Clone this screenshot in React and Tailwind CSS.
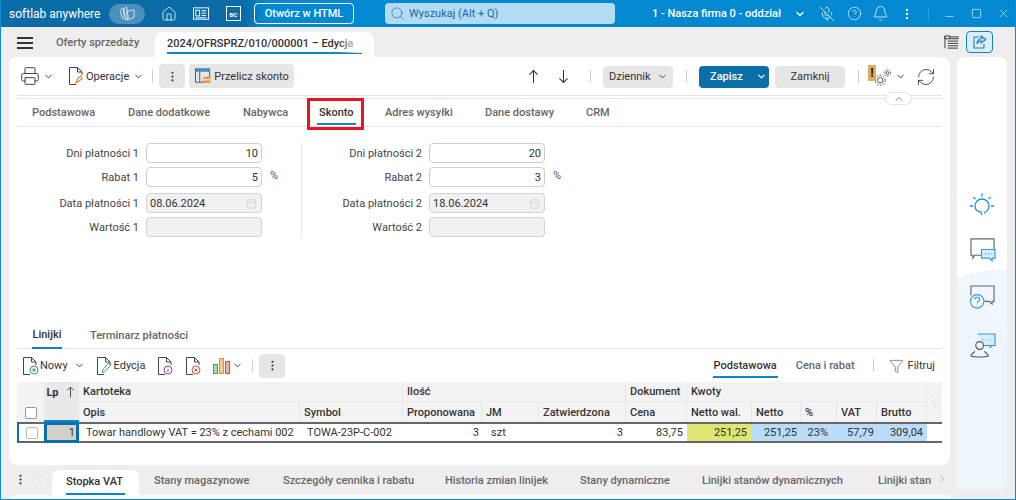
import React from 'react';
import {
  Bell, ChevronDown, ChevronLeft, ChevronRight, ChevronUp, CircleHelp,
  EllipsisVertical, Funnel, House, Minus, MicOff, Printer, RefreshCw, Search, Square, X,
} from 'lucide-react';

const mainTabs = [
  ['Podstawowa', 'w-[96px]'],
  ['Dane dodatkowe', 'w-[115px]'],
  ['Nabywca', 'w-[76px]'],
  ['Skonto', 'w-[66px]'],
  ['Adres wysyłki', 'w-[100px]'],
  ['Dane dostawy', 'w-[101px]'],
  ['CRM', 'w-[40px]'],
];

const bottomTabs = [
  ['Stany magazynowe', 'w-[129px]'],
  ['Szczegóły cennika i rabatu', 'w-[162px]'],
  ['Historia zmian linijek', 'w-[135px]'],
  ['Stany dynamiczne', 'w-[122px]'],
  ['Linijki stanów dynamicznych', 'w-[176px]'],
  ['Linijki stan', 'w-[63px]'],
];

const gridCols = 'grid grid-cols-[27px_18px_17px_221px_103px_79px_57px_87px_61px_65px_49px_36px_40px_50px_14px]';
const headCell = 'flex items-center px-1 border-r border-[#e6e6e6] text-[#333] whitespace-nowrap overflow-hidden';

const DocIcon = ({ children, className = '' }) => (
  <svg viewBox="0 0 18 20" className={`w-[18px] h-[20px] shrink-0 ${className}`} fill="none">
    <path d="M2.5 18.5V1.5h8l4.5 4.5v3M10.5 1.5V6H15M2.5 18.5H9" stroke="#444" strokeWidth="1" />
    {children}
  </svg>
);

// tall thin arrow, the icon pack's one is too squat
const Arrow = ({ down, className = '' }) => (
  <svg viewBox="0 0 12 16" className={`w-[11px] h-[15px] ${down ? 'rotate-180' : ''} ${className}`} fill="none" stroke="#333" strokeWidth="1.100">
    <path d="M6 15V1.500M1.500 6L6 1.500 10.500 6" />
  </svg>
);

const Sep = ({ className = '' }) => <div className={`w-px h-[13px] bg-[#cfcfcf] shrink-0 ${className}`} />;

const Field = ({ label, value, suffix, disabled, date, className = '' }) => (
  <div className={`flex items-center h-[20px] ${className}`}>
    <span className="w-[122px] text-right text-[#444] mr-[7px] whitespace-nowrap">{label}</span>
    <div
      className={`w-[116px] h-full rounded-[4px] border flex items-center justify-between px-[3px] ${
        disabled ? 'bg-[#f1f1f1] border-[#d4d4d4]' : 'bg-white border-[#cdcdcd] justify-end'
      }`}
    >
      <span className="text-[#333]">{value}</span>
      {date && (
        <svg viewBox="0 0 12 12" className="w-[11px] h-[11px] mr-[1px]" fill="none" stroke="#dcdcdc" strokeWidth="1.2">
          <rect x="1.5" y="2" width="9" height="9" rx="1" />
          <path d="M1.5 5h9M4 1v2M8 1v2" />
        </svg>
      )}
    </div>
    {suffix && <span className="w-0 ml-2 -mr-2 text-[#555] -mt-1 whitespace-nowrap">{suffix}</span>}
  </div>
);

const FormCol = ({ n, vals, className = '' }) => (
  <div className={`flex flex-col gap-[4px] ${className}`}>
    <Field label={`Dni płatności ${n}`} value={vals[0]} />
    <Field label={`Rabat ${n}`} value={vals[1]} suffix="%" />
    <Field label={`Data płatności ${n}`} value={vals[2]} disabled date className="mt-[2px]" />
    <Field label={`Wartość ${n}`} disabled />
  </div>
);

export default function App() {
  return (
    <div className="w-[1016px] h-[500px] overflow-hidden flex flex-col bg-[#eeeeee] border-x border-b border-[#0a8dd4] text-[11px] leading-none font-['Roboto',sans-serif] text-[#333]">
      {/* top bar */}
      <header className="h-[27px] shrink-0 -mx-px flex items-center text-white bg-[linear-gradient(90deg,#0a6ba6_0%,#0a6ba6_24%,#0389d2_26%,#0389d2_100%)]">
        <span className="ml-[9px] text-[12px] w-[100px] shrink-0 whitespace-nowrap">softlab anywhere</span>
        <div className="w-[36px] h-[20px] shrink-0 rounded-full bg-[#4c90bd] flex items-center justify-center">
          <svg viewBox="0 0 18 16" className="w-[17px] h-[15px]" fill="none" stroke="#d5e6f2" strokeWidth="1">
            <path d="M1 5l3-3 2 10-2 2zM5 3l3-2 2 12-3 2zM8 6l8-2v8l-7 3z" />
          </svg>
        </div>
        <House className="w-[16px] h-[16px] ml-[16px] shrink-0" strokeWidth={1.2} />
        <svg viewBox="0 0 18 14" className="w-[17px] h-[14px] ml-[16px] shrink-0" fill="none" stroke="white" strokeWidth="1">
          <rect x="0.5" y="0.5" width="16" height="12" />
          <rect x="3" y="3" width="4" height="6" />
          <path d="M9 3.5h5M9 6h5M9 8.500h5M3 11h11" />
        </svg>
        <div className="w-[15px] h-[15px] ml-[16px] shrink-0 border border-white flex items-end justify-center text-[6px] font-bold pb-[2px]">BC</div>
        <div className="w-[100px] h-[21px] ml-[13px] shrink-0 rounded-[4px] border border-white flex items-center justify-center font-medium">
          Otwórz w HTML
        </div>
        <div className="w-[230px] h-[21px] ml-[31px] shrink-0 rounded-[4px] bg-[#b3dcf4] flex items-center text-[#17689c]">
          <Search className="w-[15px] h-[15px] ml-[5px] mr-[4px]" strokeWidth={1.1} />
          <span>Wyszukaj (Alt + Q)</span>
        </div>
        <span className="ml-[37px] w-[128px] shrink-0 whitespace-nowrap font-medium">1 - Nasza firma 0 - oddział</span>
        <ChevronDown className="w-[12px] h-[12px] ml-[14px] shrink-0" strokeWidth={2.5} />
        <MicOff className="w-[16px] h-[16px] ml-[13px] shrink-0" strokeWidth={1.1} />
        <CircleHelp className="w-[15px] h-[15px] ml-[12px] shrink-0" strokeWidth={1.1} />
        <Bell className="w-[17px] h-[17px] ml-[10px] shrink-0" strokeWidth={1.1} />
        <EllipsisVertical className="w-[14px] h-[14px] ml-[11px] shrink-0" strokeWidth={2} />
        <div className="w-px h-[15px] bg-[#2f9ddb] ml-[14px] shrink-0" />
        <Minus className="w-[13px] h-[13px] ml-[14px] mt-[5px] shrink-0" strokeWidth={1} />
        <Square className="w-[11px] h-[11px] ml-[15px] shrink-0" strokeWidth={1.300} />
        <X className="w-[13px] h-[13px] ml-[15px] shrink-0" strokeWidth={1} />
      </header>

      <div className="flex-1 flex min-h-0">
        <div className="w-[950px] shrink-0 flex flex-col min-w-0">
          {/* document tabs */}
          <div className="h-[30px] shrink-0 flex items-end relative">
            <div className="ml-[16px] mb-[8px] w-[16px] flex flex-col gap-[3px]">
              <div className="h-[2px] bg-[#333]" />
              <div className="h-[2px] bg-[#333]" />
              <div className="h-[2px] bg-[#333]" />
            </div>
            <span className="ml-[23px] mb-[9px] w-[100px] text-[#666] font-medium whitespace-nowrap">Oferty sprzedaży</span>
            <div className="w-[219px] h-[25px] -ml-[1px] bg-white rounded-t-[8px] px-[12px] relative">
              <div className="h-[22px] border-b-2 border-[#0a86cb] flex items-center pt-[3px] overflow-hidden whitespace-nowrap font-medium text-[#333]">
                2024/OFRSPRZ/010/000001 – Edycja
              </div>
              <div className="absolute right-[12px] top-[4px] w-[24px] h-[17px] bg-[linear-gradient(90deg,rgba(255,255,255,0),white)]" />
            </div>
            <svg viewBox="0 0 16 16" className="absolute left-[943px] top-[8px] w-[15px] h-[15px]" fill="none" stroke="#333" strokeWidth="1">
              <path d="M1 1h5v3H1zM1 1v13M6 2h9v2H6M4 6.500h11M4 9h11M4 11.500h11M4 14h11" />
            </svg>
          </div>

          {/* main card */}
          <div className="ml-[8px] mr-[1px] h-[408px] shrink-0 bg-white rounded-[8px] px-[8px] flex flex-col">
            <div className="h-[38px] shrink-0 flex items-center relative">
              <Printer className="w-[20px] h-[20px] ml-[3px] text-[#333]" strokeWidth={1.1} />
              <ChevronDown className="w-[11px] h-[11px] ml-[3px]" />
              <DocIcon className="ml-[13px]">
                <path d="M9 17l2-5 3-2 1 3-3 2z" fill="none" stroke="#e78a2e" strokeWidth="1.2" />
              </DocIcon>
              <span className="ml-[1px]">Operacje</span>
              <ChevronDown className="w-[11px] h-[11px] ml-[4px]" />
              <Sep className="ml-[8px]" />
              <div className="w-[26px] h-[24px] ml-[6px] rounded-[4px] bg-[#e6e6e6] flex items-center justify-center">
                <EllipsisVertical className="w-[13px] h-[13px]" />
              </div>
              <div className="w-[105px] h-[24px] ml-[4px] rounded-[4px] bg-[#e6e6e6] flex items-center whitespace-nowrap">
                <svg viewBox="0 0 18 18" className="w-[17px] h-[17px] ml-[6px] mr-[2px]" fill="none">
                  <rect x="0.5" y="1" width="15" height="14" stroke="#555" />
                  <path d="M1 1h14v3H1z" fill="#3d8fc8" />
                  <path d="M5 4v11" stroke="#555" />
                  <ellipse cx="12.500" cy="12.500" rx="4.500" ry="3.500" fill="#ec9a4a" />
                  <path d="M8 12.500h9" stroke="white" />
                </svg>
                Przelicz skonto
              </div>
              <Arrow className="absolute left-[511px]" />
              <Arrow down className="absolute left-[541px]" />
              <div className="ml-auto flex items-center mt-[1px]">
                <Sep />
                <div className="w-[70px] h-[22px] ml-[12px] rounded-[4px] bg-[#e6e6e6] flex items-center pl-[6px]">
                  Dziennik
                  <ChevronDown className="w-[11px] h-[11px] ml-[6px]" />
                </div>
                <Sep className="ml-[13px]" />
                <div className="w-[70px] h-[22px] ml-[12px] rounded-[4px] bg-[#0a6ea8] text-white font-medium flex items-center pl-[11px]">
                  Zapisz
                  <ChevronDown className="w-[11px] h-[11px] ml-[13px]" strokeWidth={2.5} />
                </div>
                <div className="w-[70px] h-[22px] ml-[6px] rounded-[4px] bg-[#e6e6e6] flex items-center justify-center">Zamknij</div>
                <Sep className="ml-[13px]" />
                <div className="w-[22px] h-[22px] ml-[9px] relative">
                  <svg viewBox="0 0 22 20" className="absolute left-[4px] top-[2px] w-[20px] h-[19px]" fill="none" stroke="#555" strokeWidth="1.100">
                    <circle cx="9" cy="13" r="3" />
                    <circle cx="9" cy="13" r="5.500" strokeDasharray="2 1.500" />
                    <circle cx="17" cy="5" r="1.500" />
                    <circle cx="17" cy="5" r="3.500" strokeDasharray="1.500 1" />
                  </svg>
                  <div className="absolute left-0 top-[-1px] w-[8px] h-[16px] bg-[#dcae5c] text-[#222] font-bold text-[13px] flex items-center justify-center">!</div>
                </div>
                <ChevronDown className="w-[11px] h-[11px] ml-[5px]" />
                <RefreshCw className="w-[20px] h-[20px] ml-[10px] mr-[6px]" strokeWidth={1} />
              </div>
            </div>

            {/* subtabs */}
            <div className="h-[32px] shrink-0 border-t border-[#e2e2e2] relative">
              <div className="absolute left-0 right-0 top-[2px] h-px bg-[#e2e2e2]" />
              <div className="absolute right-[30px] -top-[4px] w-[27px] h-[13px] rounded-full bg-white border border-[#e2e2e2] flex items-center justify-center">
                <ChevronUp className="w-[12px] h-[12px] text-[#888]" strokeWidth={2} />
              </div>
              <div className="absolute left-0 right-0 top-[30px] h-px bg-[#e2e2e2]" />
              <div className="flex h-[29px] items-center pl-[15px] pt-[3px] font-medium text-[#666]">
                {mainTabs.map(([t, w]) => (
                  <span key={t} className={`${w} whitespace-nowrap ${t === 'Skonto' ? 'text-[#333]' : ''}`}>{t}</span>
                ))}
              </div>
              {/* red highlight round the Skonto tab */}
              <div className="absolute left-[290px] top-[2px] w-[57px] h-[32px] border-[3px] border-[#e8141f]">
                <div className="absolute left-[7px] right-[5px] bottom-[2px] h-[2px] bg-[#0a86cb]" />
              </div>
            </div>

            {/* form */}
            <div className="flex mt-[16px] h-[94px] shrink-0">
              <FormCol n={1} vals={['10', '5', '08.06.2024']} />
              <div className="w-px bg-[#e4e4e4] ml-[39px]" />
              <FormCol n={2} vals={['20', '3', '18.06.2024']} className="-ml-[2px]" />
            </div>

            {/* lines section */}
            <div className="mt-[88px] h-[24px] shrink-0 flex border-b border-[#e6e6e6] font-medium pl-[15px]">
              <div className="w-[30px] h-[24px] pb-[4px] border-b-2 border-[#0a86cb] flex items-center justify-center">Linijki</div>
              <div className="ml-[28px] h-[24px] pb-[4px] flex items-center text-[#666] whitespace-nowrap">Terminarz płatności</div>
            </div>

            <div className="h-[33px] shrink-0 flex items-center">
              <DocIcon className="ml-[4px]">
                <circle cx="13" cy="14" r="4" stroke="#2ea44f" />
                <path d="M13 12v4M11 14h4" stroke="#2ea44f" />
              </DocIcon>
              <span className="ml-[1px]">Nowy</span>
              <ChevronDown className="w-[11px] h-[11px] ml-[6px]" />
              <DocIcon className="ml-[10px]">
                <path d="M7 16.500l1-3 6-7 2 2-6 7z" stroke="#3f8fd0" />
              </DocIcon>
              <span className="ml-[1px]">Edycja</span>
              <DocIcon className="ml-[11px]">
                <circle cx="12" cy="14" r="4" stroke="#8d3fb8" />
                <path d="M12 13v3M12 11.500v.500" stroke="#8d3fb8" />
              </DocIcon>
              <DocIcon className="ml-[10px]">
                <circle cx="12" cy="14" r="4" stroke="#e0483f" />
                <path d="M10.500 12.500l3 3M13.500 12.500l-3 3" stroke="#e0483f" />
              </DocIcon>
              <svg viewBox="0 0 18 16" className="w-[18px] h-[16px] ml-[11px]" fill="none">
                <rect x="0.5" y="6.500" width="4" height="9" fill="#a8dcae" stroke="#3aa655" />
                <rect x="6.500" y="0.500" width="4" height="15" fill="#f6c98d" stroke="#e58d2d" />
                <rect x="12.500" y="3.500" width="4" height="12" fill="#f5aaa6" stroke="#e0483f" />
              </svg>
              <ChevronDown className="w-[11px] h-[11px] ml-[1px]" />
              <Sep className="ml-[9px]" />
              <div className="w-[26px] h-[24px] ml-[6px] rounded-[4px] bg-[#e6e6e6] flex items-center justify-center">
                <EllipsisVertical className="w-[13px] h-[13px]" />
              </div>
              <div className="ml-auto flex items-center h-full">
                <div className="h-[24px] mt-[1px] border-b-2 border-[#0a86cb] flex items-center px-[1px] font-medium">Podstawowa</div>
                <span className="ml-[18px] text-[#666] font-medium">Cena i rabat</span>
                <Sep className="ml-[18px]" />
                <Funnel className="w-[15px] h-[16px] ml-[15px] text-[#444]" strokeWidth={1} />
                <span className="ml-[4px] mr-[7px]">Filtruj</span>
              </div>
            </div>

            {/* grid */}
            <div className={`${gridCols} grid-rows-[20px_20px] bg-[#f3f3f3] font-medium text-[#444]`}>
              <div className="row-span-2 flex items-end justify-center pb-[3px] bg-[#f3f3f3]">
                <div className="w-[12px] h-[12px] bg-white rounded-[2px] border border-[#999]" />
              </div>
              <div className={`${headCell} bg-[#e9e9e9] font-bold justify-center !px-0`}>Lp</div>
              <div className={`${headCell} bg-[#e9e9e9] justify-center !px-0`}><Arrow className="!w-[9px] !h-[12px]" /></div>
              <div className={`${headCell} col-span-2 border-b border-b-[#e6e6e6]`}>Kartoteka</div>
              <div className={`${headCell} col-span-3 border-b border-b-[#e6e6e6]`}>Ilość</div>
              <div className={`${headCell} border-b border-b-[#e6e6e6]`}>Dokument</div>
              <div className={`${headCell} col-span-5 border-b border-b-[#e6e6e6]`}>Kwoty</div>
              <div className="row-span-2 flex items-center justify-center bg-[#f3f3f3]"><ChevronLeft className="w-[14px] h-[14px] text-[#bbb]" strokeWidth={1} /></div>
              <div className="col-span-2 bg-[#e9e9e9] border-b-2 border-[#0a86cb]" />
              {['Opis', 'Symbol', 'Proponowana', 'JM', 'Zatwierdzona', 'Cena', 'Netto wal.', 'Netto', '%', 'VAT', 'Brutto'].map((h) => (
                <div key={h} className={headCell}>{h}</div>
              ))}
            </div>
            <div className={`${gridCols} h-[21px] border-y-2 border-[#666] bg-white text-[#333]`}>
              <div className="flex items-center justify-center border-l-[2px] border-[#0a6ea8] -my-[2px]">
                <div className="w-[12px] h-[12px] bg-white rounded-[2px] border border-[#bbb]" />
              </div>
              <div className="col-span-2 -my-[2px] border-[3px] border-[#0a6ea8] bg-[#d4d1cb] flex items-center justify-end pr-[1px]">1</div>
              <div className="flex items-center pl-[7px] whitespace-nowrap">Towar handlowy VAT = 23% z cechami 002</div>
              <div className="flex items-center pl-[7px] whitespace-nowrap">TOWA-23P-C-002</div>
              <div className="flex items-center justify-end pr-[3px]">3</div>
              <div className="flex items-center pl-[9px]">szt</div>
              <div className="flex items-center justify-end pr-[3px]">3</div>
              <div className="flex items-center justify-end pr-[4px]">83,75</div>
              <div className="flex items-center justify-end pr-[5px] bg-[#dfe673]">251,25</div>
              <div className="flex items-center justify-end pr-[4px] bg-[#b9dcf8]">251,25</div>
              <div className="flex items-center justify-end pr-[9px] bg-[#b9dcf8]">23%</div>
              <div className="flex items-center justify-end pr-[3px] bg-[#b9dcf8]">57,79</div>
              <div className="flex items-center justify-end pr-[4px] bg-[#b9dcf8]">309,04</div>
              <div />
            </div>
          </div>

          {/* bottom tabs */}
          <div className="h-[30px] shrink-0 flex items-end text-[#666] relative">
            <EllipsisVertical className="w-[13px] h-[13px] shrink-0 ml-[13px] mb-[9px] text-[#333]" />
            <ChevronLeft className="w-[14px] h-[14px] shrink-0 ml-[5px] mb-[9px] text-[#ccc]" strokeWidth={1} />
            <div className="w-[87px] h-[25px] shrink-0 ml-[6px] bg-white rounded-t-[8px] px-[14px] text-[#333] font-medium">
              <div className="h-[25px] border-b-2 border-[#0a86cb] flex items-center whitespace-nowrap">Stopka VAT</div>
            </div>
            <div className="flex shrink-0 mb-[9px] ml-[15px] font-medium">
              {bottomTabs.map(([t, w]) => (
                <span key={t} className={`${w} whitespace-nowrap`}>{t}</span>
              ))}
            </div>
            <ChevronRight className="w-[14px] h-[14px] shrink-0 -ml-[6px] mb-[9px] text-[#999]" strokeWidth={1} />
          </div>
          <div className="ml-[9px] h-[4px] bg-white rounded-t-[4px]" />
        </div>

        {/* right rail */}
        <div className="flex-1 relative">
          <div className="h-[30px] flex items-end">
            <div className="w-[27px] h-[22px] ml-[15px] mb-[4px] rounded-[4px] border border-[#0a86cb] bg-[#d9eefa] flex items-center justify-center">
              <svg viewBox="0 0 16 16" className="w-[16px] h-[16px]" fill="none" stroke="#2a7fb8" strokeWidth="1.100">
                <path d="M7 3H2v11h10v-4" />
                <path d="M9 2l5 3.500L9 9V7C7 7 5.500 8 5 10c0-3 1.500-5 4-5.500z" fill="#a8d4f0" />
              </svg>
            </div>
          </div>
          <div className="absolute left-[6px] top-[30px] w-[50px] h-[433px] bg-white rounded-[8px] overflow-hidden flex flex-col items-center pt-[135px]">
            {/* pale wave behind the lower icons */}
            <svg viewBox="0 0 50 220" className="absolute left-0 bottom-0 w-[50px] h-[220px]" preserveAspectRatio="none">
              <path d="M0 10C15 3 32 1 50 0V220H0z" fill="#f1f8fd" />
              <path d="M0 10C15 3 32 1 50 0" fill="none" stroke="#d5ebf8" strokeWidth="1" strokeDasharray="4 3" />
              <path d="M0 14L50 70V220H0z" fill="#eef6fc" />
            </svg>
            <svg viewBox="0 0 26 26" className="w-[26px] h-[26px] relative" fill="none" stroke="#1c93dc" strokeWidth="1.300">
              <path d="M13 23c-1-1-1-2-1-3-4-.5-6-3-6-6a7 7 0 0 1 14 0c0 4-3 6-5 7" />
              <path d="M13 1.500v3M4.500 5l2 2M21.500 5l-2 2M1 14h3M22 14h3" />
            </svg>
            <svg viewBox="0 0 28 26" className="w-[27px] h-[25px] relative mt-[19px]" fill="none" strokeWidth="1.200">
              <path d="M14 19H6l-2 3v-3H2V2h24v12" stroke="#666" />
              <path d="M13 13h14v9h-3v3l-3-3h-8z" fill="#d9eefa" stroke="#2a9be0" />
              <path d="M17 17.500h1M20 17.500h1M23 17.500h1" stroke="#2a9be0" />
            </svg>
            <svg viewBox="0 0 28 26" className="w-[27px] h-[25px] relative mt-[23px]" fill="none" strokeWidth="1.200">
              <path d="M2 11V1h24v16h-2v3l-3-3h-5" stroke="#666" />
              <circle cx="8.500" cy="17" r="7" stroke="#2a9be0" fill="#f0f7fc" />
              <path d="M6 15c0-3 5-3 5 0 0 2-2.500 2-2.500 4M8.500 21v.500" stroke="#2a9be0" />
            </svg>
            <svg viewBox="0 0 28 26" className="w-[27px] h-[25px] relative mt-[23px]" fill="none" strokeWidth="1.200">
              <path d="M9 1h18v12h-3l-2 2v-2h-8" stroke="#2a9be0" fill="#d9eefa" />
              <path d="M14 7h1M18 7h1M22 7h1" stroke="#2a9be0" />
              <circle cx="11" cy="13" r="4" stroke="#555" fill="#f0f7fc" />
              <path d="M7 25l-5-1c0-3 3-3 4-5M15 25l5-1c0-3-3-3-4-5M7 25h8" stroke="#555" />
            </svg>
          </div>
        </div>
      </div>
    </div>
  );
}
